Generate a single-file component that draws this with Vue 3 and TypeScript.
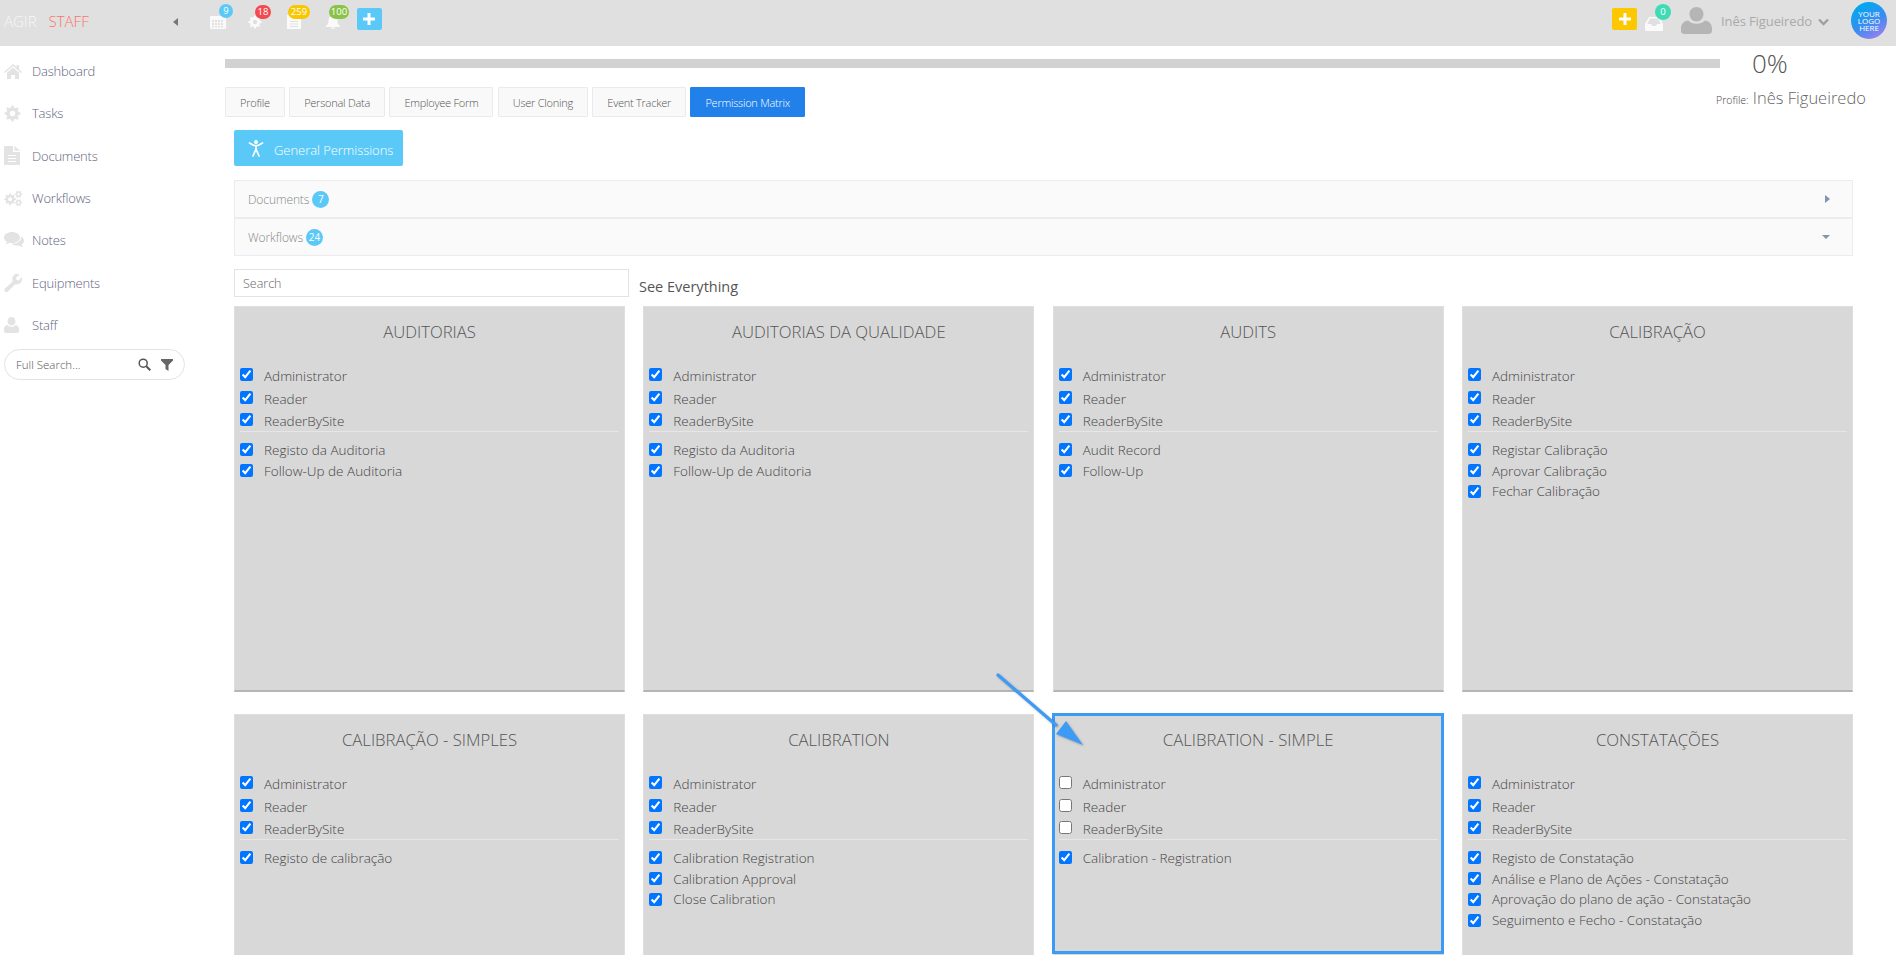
<script setup lang="ts">
interface Card {
  title: string
  base: boolean
  perms: string[]
  highlight?: boolean
}

function gear(cx: number, cy: number, r: number, teeth = 8): string {
  const pts: string[] = []
  const n = teeth * 4
  for (let i = 0; i < n; i++) {
    const a = ((i - 0.5) / n) * Math.PI * 2
    const rad = i % 4 < 2 ? r : r * 0.74
    pts.push(`${(cx + rad * Math.cos(a)).toFixed(2)} ${(cy + rad * Math.sin(a)).toFixed(2)}`)
  }
  const h = r * 0.34
  return `M${pts.join('L')}Z M${cx - h} ${cy}a${h} ${h} 0 1 0 ${2 * h} 0a${h} ${h} 0 1 0 ${-2 * h} 0Z`
}

const gearOne = gear(9, 9, 8.5)
const cogs = `${gear(7, 11, 7)} ${gear(17, 5, 4.4, 6)} ${gear(17, 15, 4.2, 6)}`

const nav = ['Dashboard', 'Tasks', 'Documents', 'Workflows', 'Notes', 'Equipments', 'Staff']
const tabs = ['Profile', 'Personal Data', 'Employee Form', 'User Cloning', 'Event Tracker', 'Permission Matrix']
const roles = ['Administrator', 'Reader', 'ReaderBySite']

const cards: Card[] = [
  { title: 'AUDITORIAS', base: true, perms: ['Registo da Auditoria', 'Follow-Up de Auditoria'] },
  { title: 'AUDITORIAS DA QUALIDADE', base: true, perms: ['Registo da Auditoria', 'Follow-Up de Auditoria'] },
  { title: 'AUDITS', base: true, perms: ['Audit Record', 'Follow-Up'] },
  { title: 'CALIBRAÇÃO', base: true, perms: ['Registar Calibração', 'Aprovar Calibração', 'Fechar Calibração'] },
  { title: 'CALIBRAÇÃO - SIMPLES', base: true, perms: ['Registo de calibração'] },
  { title: 'CALIBRATION', base: true, perms: ['Calibration Registration', 'Calibration Approval', 'Close Calibration'] },
  { title: 'CALIBRATION - SIMPLE', base: false, perms: ['Calibration - Registration'], highlight: true },
  {
    title: 'CONSTATAÇÕES',
    base: true,
    perms: [
      'Registo de Constatação',
      'Análise e Plano de Ações - Constatação',
      'Aprovação do plano de ação - Constatação',
      'Seguimento e Fecho - Constatação',
    ],
  },
]
</script>

<template>
  <div class="page">
    <header class="topbar">
      <div class="brand"><span class="agir">AGIR</span><span class="staff">STAFF</span></div>
      <span class="collapse"></span>
      <div class="tool t-cal">
        <svg width="16" height="15" viewBox="0 0 16 15"><path fill="#fafafa" fill-rule="evenodd" d="M1 2h14a1 1 0 0 1 1 1v11a1 1 0 0 1-1 1H1a1 1 0 0 1-1-1V3a1 1 0 0 1 1-1ZM2 6v2h2V6Zm3 0v2h2V6Zm3 0v2h2V6Zm3 0v2h2V6ZM2 9v2h2V9Zm3 0v2h2V9Zm3 0v2h2V9Zm3 0v2h2V9Zm-9 3v1.5h2V12Zm3 0v1.5h2V12Zm3 0v1.5h2V12Zm3 0v1.5h2V12Z"/></svg>
        <b class="badge blue">9</b>
      </div>
      <div class="tool t-gear">
        <svg width="14" height="14" viewBox="0 0 18 18"><path fill="#fafafa" fill-rule="evenodd" :d="gearOne"/></svg>
        <b class="badge red">18</b>
      </div>
      <div class="tool t-doc">
        <svg width="14" height="14" viewBox="0 0 14 14"><path fill="#fafafa" fill-rule="evenodd" d="M0 0h9l5 4v10H0Zm3 6v1h8V6Zm0 2.500v1h8v-1Zm0 2.500v1h8v-1Z"/></svg>
        <b class="badge yellow">259</b>
      </div>
      <div class="tool t-bell">
        <svg width="14" height="14" viewBox="0 0 14 14"><path fill="#fafafa" d="M7 0a1 1 0 0 1 1 1c2.500.5 3.500 2.500 3.500 5 0 2.500 1 3.500 2.500 5v1H0v-1c1.500-1.500 2.500-2.500 2.500-5 0-2.500 1-4.500 3.500-5a1 1 0 0 1 1-1ZM5.300 12.500h3.400a1.700 1.500 0 0 1-3.400 0Z"/></svg>
        <b class="badge green">100</b>
      </div>
      <button class="square sq-blue" type="button">
        <svg width="12" height="12" viewBox="0 0 12 12"><path fill="#fff" d="M4.500 0h3v4.500H12v3H7.500V12h-3V7.500H0v-3h4.500Z"/></svg>
      </button>

      <div class="top-right">
        <button class="square sq-yellow" type="button">
          <svg width="12" height="12" viewBox="0 0 12 12"><path fill="#fff" d="M4.500 0h3v4.500H12v3H7.500V12h-3V7.500H0v-3h4.500Z"/></svg>
        </button>
        <div class="inbox">
          <svg width="18" height="14" viewBox="0 0 18 14"><path fill="#fafafa" fill-rule="evenodd" d="M4 0h10l4 7v6a1 1 0 0 1-1 1H1a1 1 0 0 1-1-1V7Zm1 1.500L2.200 7H6l1 2h4l1-2h3.800L13 1.500Z"/></svg>
          <b class="badge teal">0</b>
        </div>
        <svg class="avatar" width="31" height="27" viewBox="0 0 31 27"><path fill="#b5b5b5" d="M15.500 0c4 0 7 3 7 7s-3 7.500-7 7.500-7-3.500-7-7.500 3-7 7-7ZM7 13.500c2 2 5 3.300 8.500 3.300s6.500-1.300 8.500-3.300c4 .5 7 3.500 7 8V24c0 2-1.500 3-3.500 3h-24C1.500 27 0 26 0 24v-2.500c0-4.500 3-7.500 7-8Z"/></svg>
        <span class="user-name">Inês Figueiredo</span>
        <svg class="chev" width="11" height="8" viewBox="0 0 11 8"><path fill="none" stroke="#a0a0a0" stroke-width="2.400" d="M1 1.500 5.500 6 10 1.500"/></svg>
        <div class="logo"><span class="logo-text">YOUR LOGO HERE</span></div>
      </div>
    </header>

    <div class="body">
      <aside class="sidebar">
        <nav class="nav">
          <a v-for="(item, i) in nav" :key="item" class="nav-item">
            <span class="nav-icon">
              <svg v-if="i === 0" width="18" height="15" viewBox="0 0 18 15"><path fill="#e3e3e3" d="M9 0l3.500 3V1H15v4.200L18 8l-1 1-8-7-8 7-1-1ZM9 3.500l6 5.200V15h-4v-4H7v4H3V8.700Z"/></svg>
              <svg v-else-if="i === 1" width="17" height="17" viewBox="0 0 18 18"><path fill="#e3e3e3" fill-rule="evenodd" :d="gearOne"/></svg>
              <svg v-else-if="i === 2" width="16" height="19" viewBox="0 0 16 19"><path fill="#e3e3e3" fill-rule="evenodd" d="M1 0h8v6h7v12a1 1 0 0 1-1 1H1a1 1 0 0 1-1-1V1a1 1 0 0 1 1-1Zm3 9v1h8V9Zm0 3v1h8v-1Zm0 3v1h8v-1ZM10.500 0 16 4.800h-5.500Z"/></svg>
              <svg v-else-if="i === 3" width="19" height="16" viewBox="0 0 22 19"><path fill="#e3e3e3" fill-rule="evenodd" :d="cogs"/></svg>
              <svg v-else-if="i === 4" width="20" height="16" viewBox="0 0 20 16"><path fill="#e3e3e3" d="M8 0c4.400 0 8 2.400 8 5.500S12.400 11 8 11c-.8 0-1.600-.1-2.300-.2C4.500 11.700 3 12.300 1.500 12.500c.7-.8 1.200-1.700 1.400-2.700C1.100 8.800 0 7.200 0 5.500 0 2.400 3.600 0 8 0Z"/><path fill="#e3e3e3" d="M17 4.500c1.800 1 3 2.500 3 4.200 0 1.500-.9 2.800-2.300 3.700.2 1 .7 2 1.400 2.800-1.500-.2-3-.9-4.100-1.800-.6.100-1.300.1-2 .1-2.300 0-4.300-.7-5.600-1.800 5 .1 10.200-2 9.600-7.200Z"/></svg>
              <svg v-else-if="i === 5" width="18" height="18" viewBox="0 0 18 18"><path fill="#e3e3e3" d="M13 0c1 0 1.900.3 2.700.8L12 3.500l.5 2.500 2.500.5L17.400 3c.4.700.6 1.500.6 2.300 0 3-2.400 5.200-5.300 5.200-.5 0-1-.1-1.500-.2L4 17.500c-.9.800-2.200.8-3-.1-.8-.8-.8-2.100 0-3l7.700-6.800C8.500 7 8.400 6.400 8.400 5.800 8 2.500 10 0 13 0Z"/></svg>
              <svg v-else width="15" height="16" viewBox="0 0 15 16"><path fill="#e3e3e3" d="M7.500 0C10 0 11.500 2 11.500 4.300S10 8.500 7.500 8.500 3.500 6.600 3.500 4.300 5 0 7.500 0ZM3.300 8c1 1 2.500 1.800 4.200 1.800S10.700 9 11.700 8C13.800 8.300 15 10 15 12.500V14c0 1.200-.8 2-2 2H2c-1.200 0-2-.8-2-2v-1.500C0 10 1.200 8.300 3.300 8Z"/></svg>
            </span>
            <span class="nav-text">{{ item }}</span>
          </a>
        </nav>
        <div class="full-search">
          <input class="full-input" placeholder="Full Search..." />
          <svg width="13" height="13" viewBox="0 0 13 13"><circle cx="5.200" cy="5.200" r="4" fill="none" stroke="#555" stroke-width="1.500"/><path stroke="#555" stroke-width="2" d="m8.300 8.300 4 4"/></svg>
          <svg class="funnel" width="12" height="12" viewBox="0 0 12 12"><path fill="#666" d="M0 0h12v1.500L7.500 6v6l-3-2V6L0 1.500Z"/></svg>
        </div>
      </aside>

      <main class="main">
        <div class="head">
          <div class="head-left">
            <div class="progress"></div>
            <div class="tabs">
              <button v-for="t in tabs" :key="t" type="button" class="tab" :class="{ active: t === 'Permission Matrix' }">{{ t }}</button>
            </div>
          </div>
          <div class="head-right">
            <div class="pct">0%</div>
            <div class="profile"><small>Profile:</small> Inês Figueiredo</div>
          </div>
        </div>

        <div class="content">
          <button type="button" class="general">
            <svg width="16" height="17" viewBox="0 0 16 17"><circle cx="8" cy="2" r="2" fill="#fff"/><path fill="none" stroke="#fff" stroke-width="1.700" stroke-linecap="round" stroke-linejoin="round" d="M1.500 3 6 5.500h4L14.500 3M8 5.500V10M8 9l-3 7M8 9l3 7"/></svg>
            <span class="general-text">General Permissions</span>
          </button>

          <div class="accordion">
            <div class="acc-row">
              <span class="acc-label">Documents</span><b class="acc-badge">7</b>
              <span class="arrow-right"></span>
            </div>
            <div class="acc-row">
              <span class="acc-label">Workflows</span><b class="acc-badge">24</b>
              <span class="arrow-down"></span>
            </div>
          </div>

          <div class="filter">
            <input class="search" placeholder="Search" />
            <span class="see">See Everything</span>
          </div>

          <div class="grid">
            <section v-for="c in cards" :key="c.title" class="card">
              <h3>{{ c.title }}</h3>
              <label v-for="r in roles" :key="r" class="role">
                <input type="checkbox" :checked="c.base" /><span>{{ r }}</span>
              </label>
              <hr />
              <label v-for="p in c.perms" :key="p" class="perm">
                <input type="checkbox" checked /><span>{{ p }}</span>
              </label>
              <div v-if="c.highlight" class="highlight"></div>
              <svg v-if="c.highlight" class="pointer" width="92" height="82" viewBox="0 0 92 82">
                <path stroke="#3d9bf5" stroke-width="3.200" stroke-linecap="round" d="M2 2 60 52"/>
                <path fill="#3d9bf5" d="M70 48 87 72 60 61Z"/>
              </svg>
            </section>
          </div>
        </div>
      </main>
    </div>
  </div>
</template>

<style>
html,
body {
  margin: 0;
  height: 100%;
  overflow: hidden;
  background: #fff;
}
</style>

<style scoped>
.page {
  height: 955px;
  overflow: hidden;
  font-family: "Open Sans", "Liberation Sans", sans-serif;
  font-weight: 300;
  color: #555;
  display: flex;
  flex-direction: column;
}
.topbar {
  height: 46px;
  flex: none;
  background: #e0e0e0;
  display: flex;
  align-items: center;
}
.brand {
  width: 173px;
  padding-left: 4px;
  box-sizing: border-box;
  font-size: 15px;
  display: flex;
  gap: 12px;
  margin-top: -4px;
}
.agir { color: #f8f8f8; }
.staff { color: #fb7366; }
.collapse {
  width: 0;
  height: 0;
  border-style: solid;
  border-width: 4px 5px 4px 0;
  border-color: transparent #777 transparent transparent;
  margin-right: 32px;
  margin-top: -3px;
}
.tool {
  position: relative;
  display: flex;
  margin-top: -3px;
}
.t-cal { margin-right: 22px; }
.t-gear { margin-right: 25px; }
.t-doc { margin-right: 25px; }
.t-bell { margin-right: 16.500px; }
.badge {
  position: absolute;
  top: -10px;
  left: 9px;
  height: 14px;
  min-width: 14px;
  padding: 0 1px;
  box-sizing: border-box;
  border-radius: 8px;
  font-size: 9.500px;
  font-weight: 400;
  line-height: 14px;
  color: #fff;
  text-align: center;
}
.blue { background: #5bc9f8; }
.red { background: #f34a4f; min-width: 16px; left: 7px; }
.yellow { background: #f9c700; min-width: 22px; left: 1px; }
.green { background: #8bc34a; min-width: 20px; left: 3px; }
.teal { background: #3fdcb4; min-width: 16px; left: 10px; top: -13px; height: 16px; line-height: 16px; }
.square {
  width: 25px;
  height: 22px;
  border: 0;
  padding: 0;
  border-radius: 2px;
  display: flex;
  align-items: center;
  justify-content: center;
  margin-top: -8px;
}
.sq-blue { background: #5bc9f8; }
.sq-yellow { background: #fdc800; }
.top-right {
  margin-left: auto;
  display: flex;
  align-items: center;
  padding-right: 9px;
}
.inbox {
  position: relative;
  display: flex;
  margin-left: 8px;
  margin-top: 2px;
  margin-right: 18px;
}
.avatar { margin-top: -5px; }
.user-name {
  margin-left: 9px;
  font-size: 13px;
  font-weight: 400;
  letter-spacing: -0.1px;
  color: #aaa;
  margin-top: -4px;
}
.chev { margin-left: 6px; margin-top: -3px; }
.logo {
  width: 36px;
  height: 37px;
  margin-left: 22px;
  margin-top: -5px;
  border-radius: 50%;
  background: linear-gradient(150deg, #00a8f0 15%, #3a8cf0 55%, #b47cf0 100%);
  display: flex;
  align-items: center;
  justify-content: center;
}
.logo-text {
  width: 24px;
  color: #fff;
  font-size: 8px;
  font-weight: 400;
  line-height: 7px;
  text-align: center;
}
.body {
  display: flex;
  flex: 1;
  min-height: 0;
}
.sidebar {
  width: 225px;
  flex: none;
}
.nav {
  display: flex;
  flex-direction: column;
  padding-top: 4px;
}
.nav-item {
  height: 42.300px;
  display: flex;
  align-items: center;
  font-size: 13px;
  font-weight: 300;
  letter-spacing: -0.2px;
  color: #5f6580;
}
.nav-icon {
  width: 32px;
  padding-left: 4px;
  box-sizing: border-box;
  display: flex;
}
.full-search {
  width: 181px;
  height: 31px;
  margin: 3px 0 0 4px;
  box-sizing: border-box;
  border: 1px solid #e3e3e3;
  border-radius: 16px;
  display: flex;
  align-items: center;
  padding: 0 11px;
}
.full-input {
  flex: 1;
  min-width: 0;
  border: 0;
  outline: 0;
  padding: 0;
  font: 300 11.500px "Open Sans", sans-serif;
}
.full-input::placeholder { color: #555; }
.funnel { margin-left: 10px; }
.main {
  flex: 1;
  min-width: 0;
  padding-right: 43px;
}
.head {
  display: flex;
  height: 84px;
}
.head-left { width: 1495px; flex: none; }
.progress {
  height: 9px;
  margin-top: 13px;
  background: #d2d2d2;
}
.tabs {
  display: flex;
  gap: 4.400px;
  margin-top: 19px;
}
.tab {
  height: 30px;
  padding: 0 14px;
  border: 1px solid #e9e9ef;
  border-radius: 1px;
  background: #f9f9f9;
  font: 300 11px "Open Sans", sans-serif;
  letter-spacing: -0.25px;
  color: #555;
}
.tab.active {
  background: #2180ea;
  border-color: #2180ea;
  color: #fff;
}
.head-right {
  flex: 1;
  min-width: 0;
  display: flex;
  flex-direction: column;
}
.pct {
  font-size: 26px;
  line-height: 36px;
  margin-left: 32px;
  margin-top: -1px;
  color: #555;
}
.profile {
  font-size: 16.500px;
  line-height: 24px;
  margin-top: 5px;
  margin-left: -4px;
  white-space: nowrap;
  color: #666;
}
.profile small { font-size: 10.500px; color: #444; }
.content { padding-left: 9px; }
.general {
  height: 36px;
  width: 169px;
  border: 0;
  border-radius: 2px;
  background: #5bc9f8;
  color: #fff;
  font: 300 13px "Open Sans", sans-serif;
  display: flex;
  align-items: center;
  gap: 10px;
  padding: 0 0 0 14px;
  white-space: nowrap;
}
.general-text { margin-top: 4px; letter-spacing: -0.05px; }
.accordion {
  margin-top: 14px;
  display: flex;
  flex-direction: column;
}
.acc-row {
  height: 38px;
  box-sizing: border-box;
  border: 1px solid #ebebf0;
  background: #fafafa;
  display: flex;
  align-items: center;
  padding: 0 24px 0 13px;
  font-size: 12px;
  letter-spacing: -0.1px;
}
.acc-label { color: #888; }
.acc-badge {
  margin-left: 3px;
  width: 17px;
  height: 17px;
  border-radius: 50%;
  background: #5bc9f8;
  color: #fff;
  font-size: 10px;
  font-weight: 400;
  text-align: center;
  line-height: 17px;
}
.arrow-right {
  margin-left: auto;
  margin-right: -2px;
  width: 0;
  height: 0;
  border-style: solid;
  border-width: 4px 0 4px 5px;
  border-color: transparent transparent transparent #7f93b2;
}
.arrow-down {
  margin-left: auto;
  margin-right: -2px;
  width: 0;
  height: 0;
  border-style: solid;
  border-width: 4px 4px 0;
  border-color: #8693a8 transparent transparent;
}
.filter {
  display: flex;
  align-items: flex-end;
  margin-top: 13px;
  gap: 10px;
}
.search {
  width: 395px;
  height: 28px;
  box-sizing: border-box;
  padding: 0 8px;
  border: 1px solid #e3e3e3;
  outline: 0;
  font: 300 12.500px "Open Sans", sans-serif;
}
.search::placeholder { color: #666; }
.see {
  font-size: 14.500px;
  font-weight: 400;
  color: #555;
  line-height: 20px;
  margin-bottom: 0;
}
.grid {
  display: grid;
  grid-template-columns: repeat(4, 1fr);
  column-gap: 18.300px;
  row-gap: 22px;
  margin-top: 9px;
}
.card {
  position: relative;
  height: 386px;
  box-sizing: border-box;
  padding: 0 5px;
  background: #d8d8d8;
  border: 1px solid #dfdfdf;
  border-bottom: 2px solid #b5b5b5;
  font-size: 13.500px;
}
.card h3 {
  margin: 12px 0 21px;
  height: 25px;
  font-size: 16.700px;
  font-weight: 300;
  line-height: 25px;
  text-align: center;
  color: #555;
}
.role,
.perm {
  display: flex;
  align-items: center;
  color: #444;
  line-height: 18px;
}
.role { height: 22.500px; }
.perm { height: 20.800px; }
.role input,
.perm input {
  width: 13px;
  height: 13px;
  margin: 0 11px 0 0;
  flex: none;
  accent-color: #0075ff;
}
.role input { margin-top: -3px; }
.card hr {
  margin: -2px 0 8px 0;
  border: 0;
  height: 1px;
  background: #e6e6e6;
}
.highlight {
  position: absolute;
  top: -2px;
  left: -2px;
  right: -1px;
  height: 235px;
  border: 3px solid #3d9bf5;
  pointer-events: none;
}
.pointer {
  position: absolute;
  left: -58px;
  top: -42px;
  pointer-events: none;
  filter: drop-shadow(1px 1px 1px rgba(0, 0, 0, 0.25));
}
</style>
